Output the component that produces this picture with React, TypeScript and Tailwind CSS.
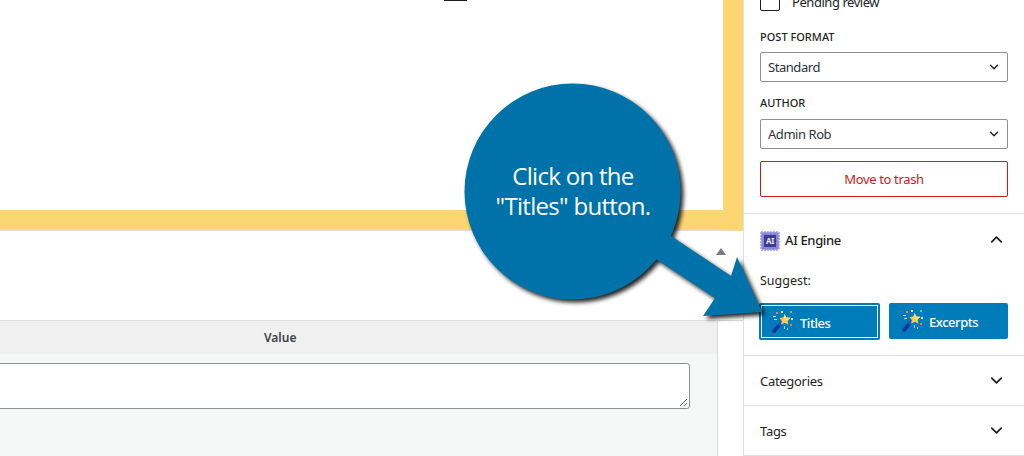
import { ChevronDown, ChevronUp } from 'lucide-react';

function Wand() {
  return (
    <svg width="22" height="22" viewBox="0 0 22 22" className="shrink-0">
      <path d="M1.8 20.2L9.5 11.5" stroke="#1b55c4" strokeWidth="3.6" strokeLinecap="round" />
      <path d="M2 20L6 15.5" stroke="#12379a" strokeWidth="3.6" strokeLinecap="round" />
      <path d="M12.5 3l1.9 3.4 3.9.4-2.7 2.9.9 4.1-3.7-2-3.7 2 .7-3.9L7.5 7l3.8-.6z" fill="#fbc94d" />
      <path d="M12.5 3l1.9 3.4 3.9.4-2.7 2.9L12 9z" fill="#ffdc7a" />
      <rect x="9" y="0" width="2" height="2" fill="#e8e8f8" />
      <rect x="4" y="1" width="2" height="2" fill="#ff7a6b" />
      <rect x="18" y="0" width="2" height="2" fill="#5fd068" />
      <rect x="1" y="5" width="3" height="1" fill="#cfe0f5" />
      <rect x="2" y="8" width="3" height="1" fill="#cfe0f5" />
      <rect x="19" y="7" width="2" height="2" fill="#dbe6f5" />
      <rect x="18" y="13" width="2" height="2" fill="#ff6b5e" />
      <rect x="12" y="15" width="1" height="3" fill="#a9c8ea" />
      <rect x="15" y="17" width="1" height="2" fill="#a9c8ea" />
    </svg>
  );
}

function ChipIcon() {
  return (
    <svg width="20" height="20" viewBox="0 0 20 20" className="shrink-0">
      <rect x="1" y="1" width="18" height="18" rx="2" fill="#a9a7e6" />
      <path d="M2 0v20M5 0v20M8 0v20M11 0v20M14 0v20M17 0v20M0 2h20M0 5h20M0 8h20M0 11h20M0 14h20M0 17h20" stroke="#6a67d0" strokeWidth="1" strokeDasharray="1.5 17 1.5" />
      <rect x="2" y="2" width="16" height="16" fill="#8886e0" />
      <rect x="4" y="4" width="12" height="12" fill="#3e3c8c" />
      <text x="10" y="13" textAnchor="middle" fontSize="8" fontWeight="700" fill="#e8e8ff" fontFamily="'Noto Sans', sans-serif">AI</text>
    </svg>
  );
}

function Select({ value }: { value: string }) {
  return (
    <div className="flex h-[30px] items-center justify-between rounded-[2px] border border-[#8c8f94] pl-[7px] pr-[6px] text-[13px] tracking-[-0.45px] text-[#2c3338]">
      <span className="relative top-[1px]">{value}</span>
      <ChevronDown size={14} strokeWidth={2.4} className="text-[#1e1e1e]" />
    </div>
  );
}

function PanelRow({ title }: { title: string }) {
  return (
    <div className="flex h-[50px] items-center justify-between border-b border-[#e0e0e0] pl-[16px] pr-[18px] text-[13px] tracking-[-0.3px] text-[#1e1e1e]">
      <span className="relative top-[1px]">{title}</span>
      <ChevronDown size={19} strokeWidth={2.2} />
    </div>
  );
}

export default function App() {
  return (
    <div className="relative flex h-[456px] w-[1024px] overflow-hidden bg-white font-['Noto_Sans',sans-serif]">
      <div className="flex w-[743px] shrink-0 flex-col">
        <div className="h-[231px] border-b border-r-[20px] border-b-[#e0e0e0] border-r-[#fcd673] bg-[#fcd673]">
          <div className="h-[210px] bg-white">
            <div className="ml-[444px] h-[1px] w-[23px] bg-[#1e1e1e]" />
          </div>
        </div>
        <div className="flex h-[89px] justify-end pr-[17px] pt-[17px]">
          <div className="h-0 w-0 border-x-[5px] border-b-[7px] border-x-transparent border-b-[#787c82]" />
        </div>
        <div className="flex flex-1 flex-col border-t border-[#dcdcde] pr-[25px]">
          <div className="flex h-[33px] items-center border-r border-[#dcdcde] bg-[#f0f0f0] pl-[264px] text-[12px] font-semibold text-[#3c434a]">
            Value
          </div>
          <div className="flex-1 overflow-hidden border-r border-[#dcdcde] bg-[#f6f7f7] pr-[27px] pt-[9px]">
            <div className="relative -ml-[6px] h-[46px] rounded-[3px] border border-[#8c8f94] bg-white">
              <svg width="9" height="9" viewBox="0 0 9 9" className="absolute bottom-[1px] right-[1px]">
                <path d="M1 8L8 1M5 8L8 5" stroke="#555" strokeWidth="1" />
              </svg>
            </div>
          </div>
        </div>
      </div>

      <div className="flex-1 border-l border-[#e0e0e0]">
        <div className="h-[214px] border-b border-[#e0e0e0] px-[16px]">
          <div className="flex h-[11px] items-end gap-[12px] overflow-hidden">
            <div className="h-[20px] w-[20px] shrink-0 rounded-[2px] border border-[#1e1e1e]" />
            <span className="relative top-[1px] text-[13px] leading-[20px] tracking-[-0.45px] text-[#1e1e1e]">Pending review</span>
          </div>
          <div className="mt-[19px] text-[11px] font-medium uppercase leading-[14px] text-[#1e1e1e]">Post format</div>
          <div className="mt-[8px]"><Select value="Standard" /></div>
          <div className="mt-[14px] text-[11px] font-medium uppercase leading-[14px] text-[#1e1e1e]">Author</div>
          <div className="mt-[9px]"><Select value="Admin Rob" /></div>
          <div className="mt-[12px] flex h-[36px] items-center justify-center rounded-[2px] border border-[#cc1818] text-[13px] tracking-[-0.35px] text-[#cc1818]">
            <span className="relative top-[1px]">Move to trash</span>
          </div>
        </div>

        <div className="h-[142px] border-b border-[#e0e0e0] px-[16px]">
          <div className="flex h-[53px] items-center justify-between pr-[2px]">
            <div className="flex items-center gap-[5px] text-[13px] font-medium tracking-[-0.35px] text-[#1e1e1e]">
              <ChipIcon />
              <span>AI Engine</span>
            </div>
            <ChevronUp size={19} strokeWidth={2.2} className="-mt-[3px] text-[#1e1e1e]" />
          </div>
          <div className="mt-[5px] text-[12.5px] leading-[18px] text-[#1e1e1e]">Suggest:</div>
          <div className="mt-[13px] flex gap-[9px]">
            <div className="-ml-[1px] flex h-[37px] w-[121px] items-center gap-[6px] rounded-[2px] border-[2px] border-[#007cba] bg-[#007cba] pl-[11px] text-[13px] font-medium tracking-[-0.45px] text-white outline outline-[1.5px] -outline-offset-[3px] outline-white">
              <Wand />
              <span className="relative top-[2px]">Titles</span>
            </div>
            <div className="flex h-[36px] w-[119px] items-center gap-[5px] rounded-[2px] bg-[#007cba] pl-[13px] text-[13px] font-medium tracking-[-0.45px] text-white">
              <Wand />
              <span className="relative top-[2px]">Excerpts</span>
            </div>
          </div>
        </div>

        <PanelRow title="Categories" />
        <PanelRow title="Tags" />
      </div>

      {/* callout bubble sits over the page */}
      <svg width="1024" height="456" viewBox="0 0 1024 456" className="pointer-events-none absolute inset-0 drop-shadow-[3px_3px_2px_rgba(0,0,0,0.85)]">
        <circle cx="572.5" cy="191.5" r="108" fill="#0072aa" />
        <polygon points="668,234 731,276 737,257 762,312 703,316 715,298 653,257" fill="#0072aa" />
      </svg>
      <div className="absolute left-[465px] top-[161px] w-[216px] text-center font-['Open_Sans',sans-serif] text-[24px] leading-[30px] tracking-[-0.7px] text-white">
        Click on the
        <br />
        "Titles" button.
      </div>
    </div>
  );
}
